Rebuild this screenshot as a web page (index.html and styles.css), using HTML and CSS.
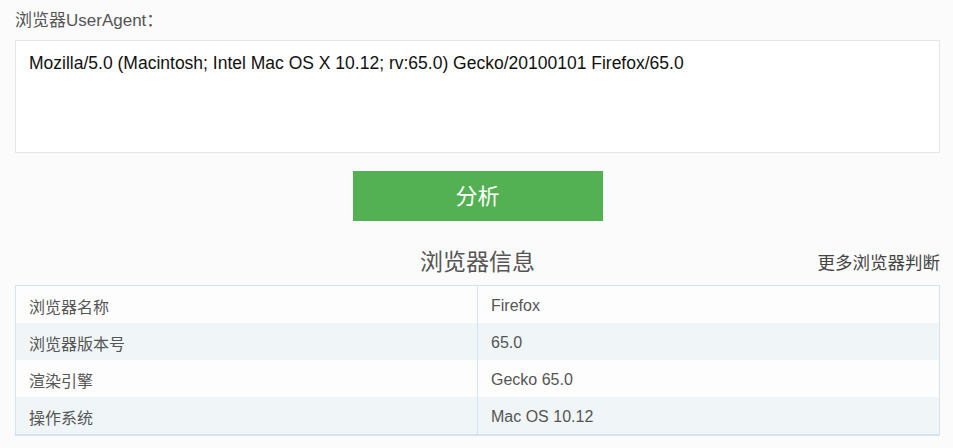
FILE: index.html
```html
<!DOCTYPE html>
<html lang="zh-CN">
<head>
<meta charset="utf-8">
<title>浏览器UserAgent</title>
<link rel="stylesheet" href="styles.css">
</head>
<body>
<main class="page">
  <label class="ua-label" for="ua">浏览器UserAgent：</label>
  <div class="ua-box" id="ua">Mozilla/5.0 (Macintosh; Intel Mac OS X 10.12; rv:65.0) Gecko/20100101 Firefox/65.0</div>
  <div class="btn-row"><button class="analyze">分析</button></div>
  <div class="info-head">
    <h2 class="info-title">浏览器信息</h2>
    <a class="more" href="#">更多浏览器判断</a>
  </div>
  <table class="info">
    <tbody>
      <tr><td>浏览器名称</td><td>Firefox</td></tr>
      <tr><td>浏览器版本号</td><td>65.0</td></tr>
      <tr><td>渲染引擎</td><td>Gecko 65.0</td></tr>
      <tr><td>操作系统</td><td>Mac OS 10.12</td></tr>
    </tbody>
  </table>
</main>
</body>
</html>
```

FILE: styles.css
```css
html, body {
  margin: 0;
  padding: 0;
  background: #fbfbfb;
}
body {
  font-family: "Liberation Sans", "Noto Sans CJK SC", sans-serif;
  color: #555;
}
.page {
  width: 925px;
  margin: 0 0 0 15px;
  display: flex;
  flex-direction: column;
}
.ua-label {
  display: block;
  font-size: 17px;
  line-height: 20px;
  margin-top: 11px;
  color: #555;
}
.ua-box {
  margin-top: 9px;
  box-sizing: border-box;
  height: 113px;
  border: 1px solid #e6e6e6;
  background: #fff;
  padding: 11px 13px 10px;
  font-size: 17.5px;
  line-height: 22px;
  color: #111;
}
.btn-row {
  display: flex;
  justify-content: center;
  margin-top: 18px;
}
.analyze {
  width: 250px;
  height: 50px;
  border: 0;
  background: #53b153;
  color: #fff;
  font-family: "Noto Sans CJK SC", sans-serif;
  font-size: 22px;
  line-height: 46px;
  padding: 0 0 4px;
}
.info-head {
  position: relative;
  display: flex;
  justify-content: center;
  align-items: center;
  height: 64px;
}
.info-title {
  margin: 0;
  font-weight: normal;
  font-size: 23px;
  color: #555;
  font-family: "Noto Sans CJK SC", sans-serif;
  padding-top: 13px;
}
.more {
  position: absolute;
  right: 0;
  top: 28px;
  font-size: 17.5px;
  color: #444;
  text-decoration: none;
  font-family: "Noto Sans CJK SC", sans-serif;
}
.info {
  width: 925px;
  border-collapse: collapse;
  table-layout: fixed;
  border: 1px solid #d5e3ee;
  border-bottom: 2px solid #d5e3ee;
  font-size: 16px;
  color: #555;
}
.info td {
  height: 37.25px;
  padding: 3px 13px 0;
  box-sizing: border-box;
}
.info td + td {
  border-left: 1px solid #d5e3ee;
}
.info tr:nth-child(odd) {
  background: #fdfdfd;
}
.info tr:nth-child(even) {
  background: #f0f5f8;
}
```
